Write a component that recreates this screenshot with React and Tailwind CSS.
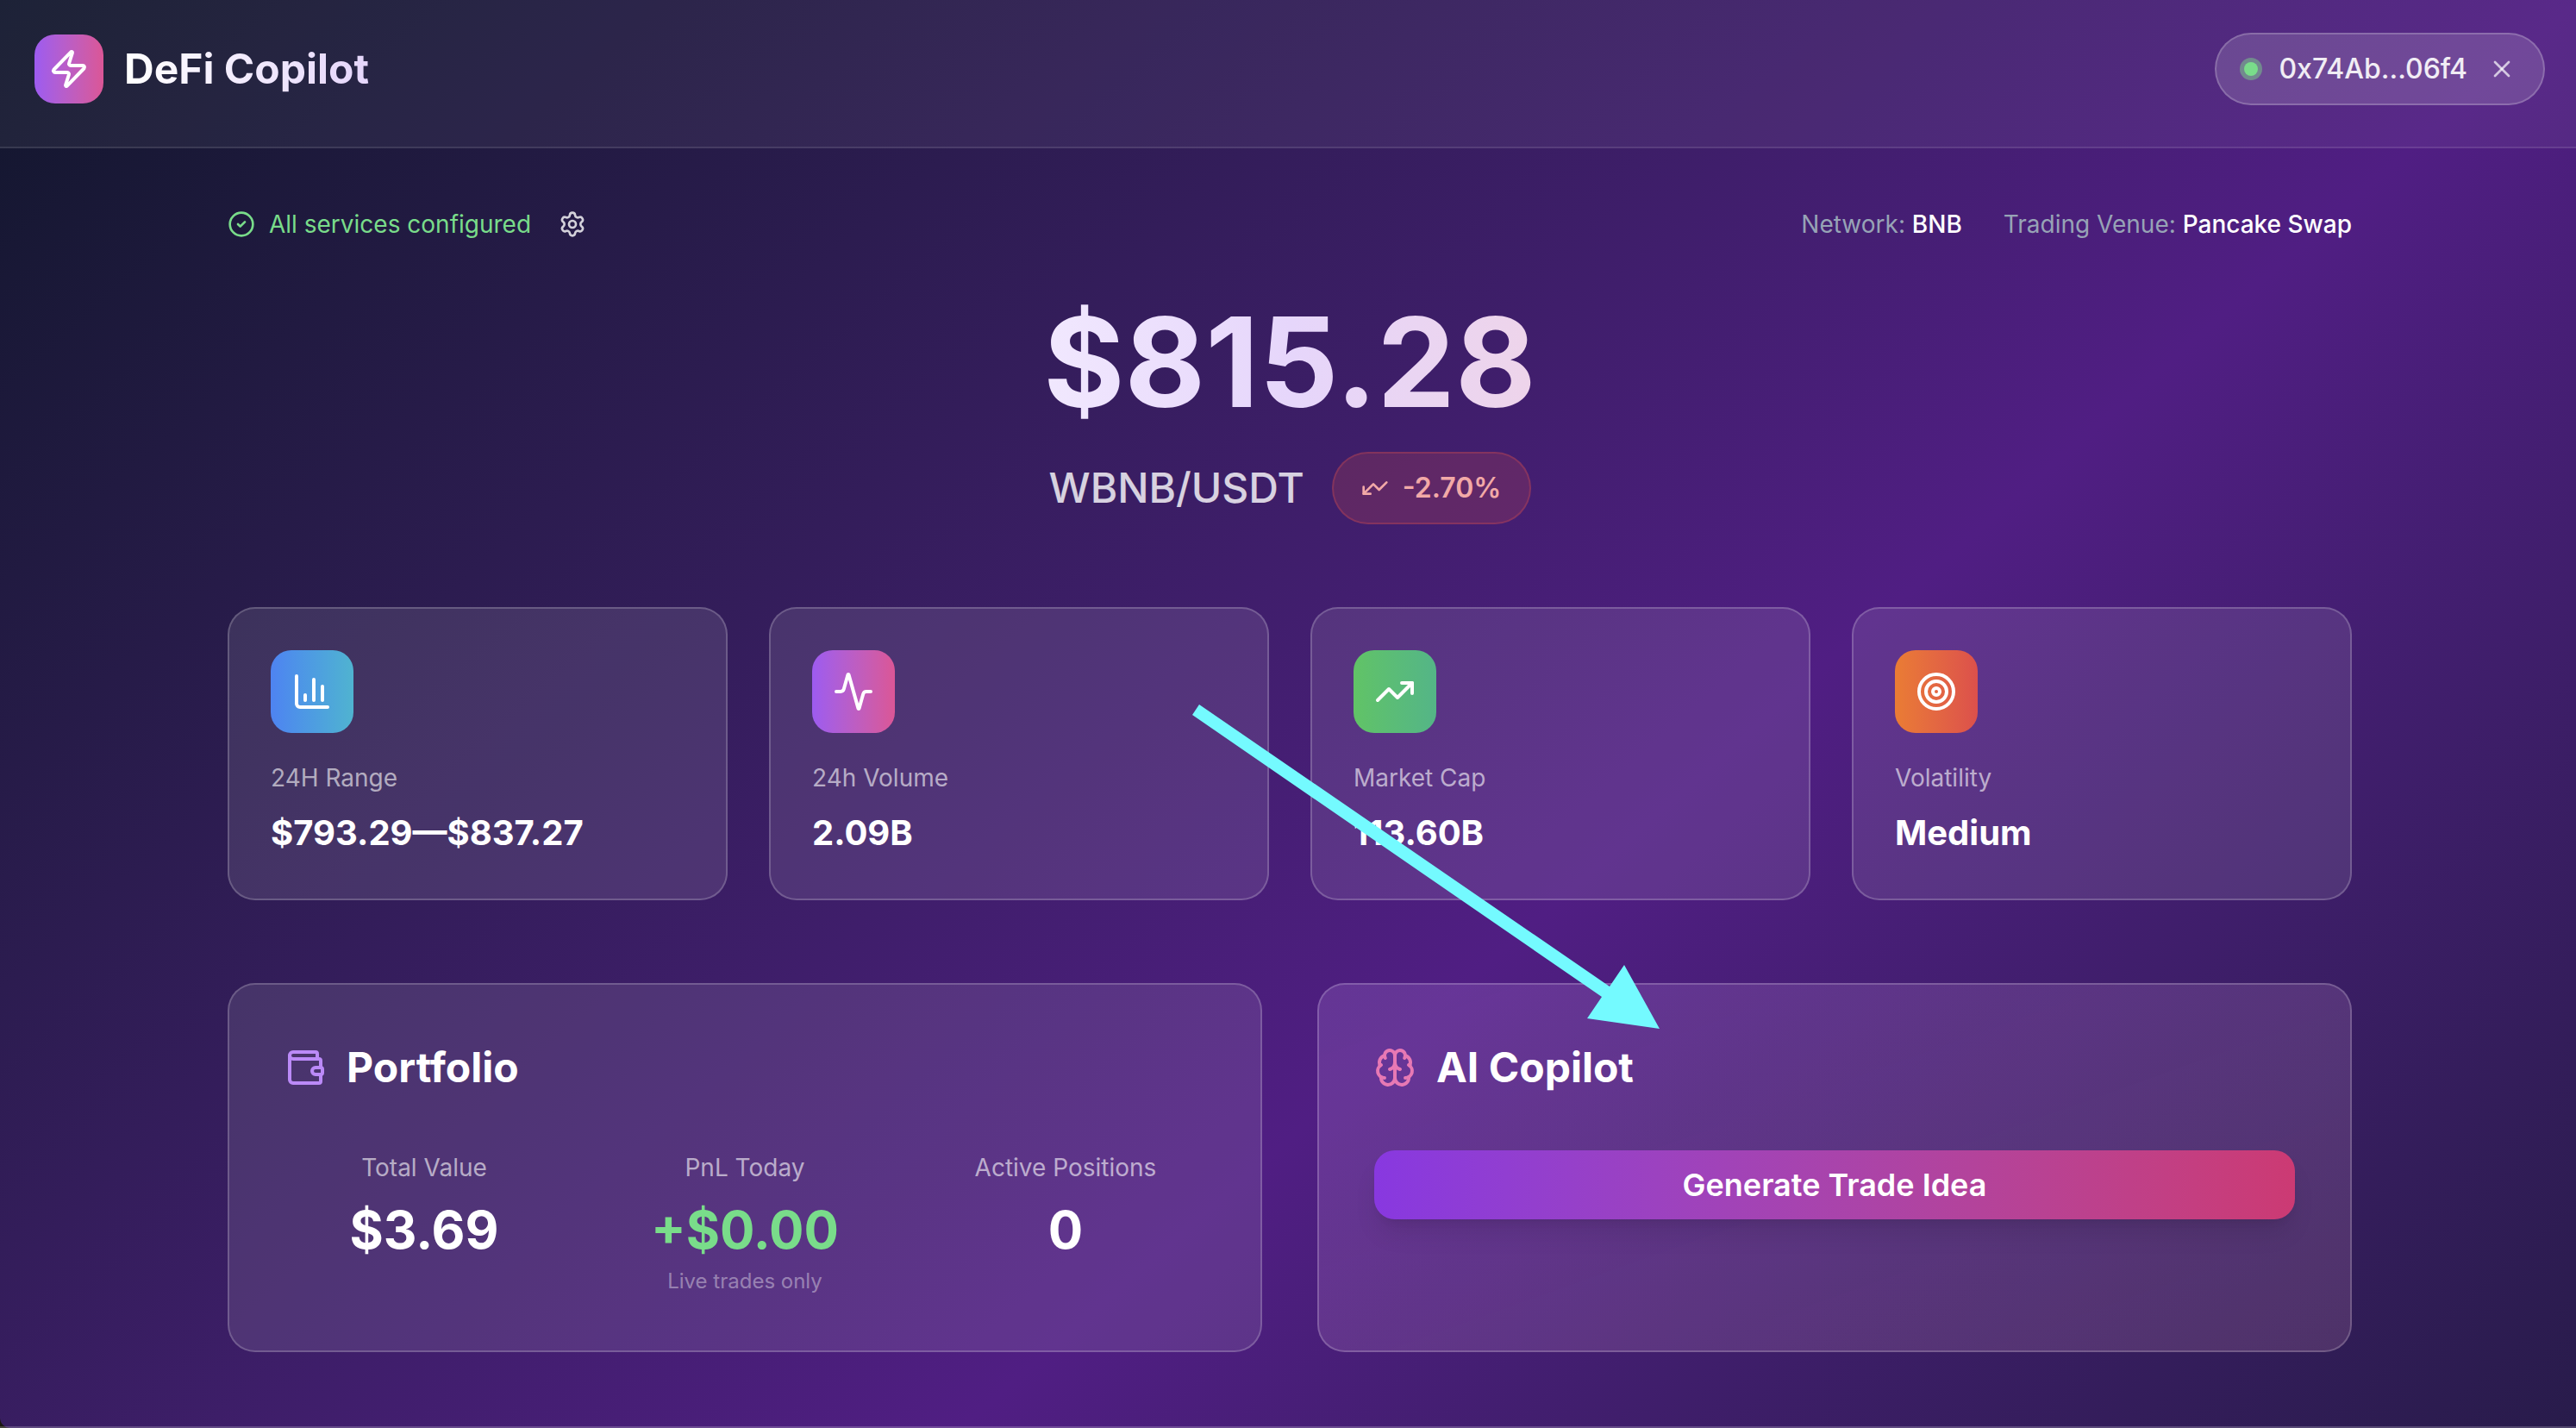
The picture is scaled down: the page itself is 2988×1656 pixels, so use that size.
import { Zap, X, CircleCheck, Settings, TrendingUp, ChartColumn, Activity, Target, Wallet, Brain } from "lucide-react";

const stats = [
  { label: "24H Range", value: "$793.29—$837.27", Icon: ChartColumn, tile: "from-[#4e83f1] to-[#50b3d0]" },
  { label: "24h Volume", value: "2.09B", Icon: Activity, tile: "from-[#9d5bf0] to-[#db5696]" },
  { label: "Market Cap", value: "113.60B", Icon: TrendingUp, tile: "from-[#61c366] to-[#54b587]" },
  { label: "Volatility", value: "Medium", Icon: Target, tile: "from-[#ea7c34] to-[#dc504b]" },
];

const portfolio = [
  { label: "Total Value", value: "$3.69", color: "text-white" },
  { label: "PnL Today", value: "+$0.00", color: "text-[#79dc8a]", note: "Live trades only" },
  { label: "Active Positions", value: "0", color: "text-white" },
];

function Header() {
  return (
    <header className="flex h-[172px] items-start justify-between border-b-2 border-white/10 bg-white/5 px-10 pt-[38px]">
      <div className="flex items-center gap-6 pt-[2px]">
        <div className="flex size-20 items-center justify-center rounded-3xl bg-linear-to-r from-[#9d5bf0] to-[#db5696]">
          <Zap size={48} />
        </div>
        <h1 className="bg-linear-to-r from-white to-[#e5d6fb] bg-clip-text text-5xl leading-16 font-bold text-transparent">
          DeFi Copilot
        </h1>
      </div>
      <div className="flex h-[84px] items-center rounded-full border-2 border-white/20 bg-white/15 px-8">
        <span className="size-4 rounded-full bg-[#79dc8a] ring-5 ring-[#79dc8a]/45" />
        <span className="ml-6 text-[32px] leading-12 font-medium text-white/90">0x74Ab...06f4</span>
        <button type="button" aria-label="Disconnect wallet" className="ml-6 text-white/70">
          <X size={32} />
        </button>
      </div>
    </header>
  );
}

function StatusRow() {
  return (
    <div className="flex items-center justify-between text-[28px] leading-10">
      <div className="flex items-center">
        <CircleCheck size={32} className="text-[#79dc8a]" />
        <span className="ml-4 text-[#79dc8a]">All services configured</span>
        <button type="button" aria-label="Settings" className="ml-8 text-white/80">
          <Settings size={32} />
        </button>
      </div>
      <div className="flex items-center gap-12 text-[#97a3b6]">
        <span>
          Network: <span className="font-medium text-white">BNB</span>
        </span>
        <span>
          Trading Venue: <span className="font-medium text-white">Pancake Swap</span>
        </span>
      </div>
    </div>
  );
}

function Price() {
  return (
    <section className="mx-auto mt-17 flex w-fit flex-col items-center">
      <p className="bg-linear-to-r from-[#f1e8fe] via-[#e6d6fb] to-[#eed4ea] bg-clip-text text-[144px] leading-[144px] font-bold text-transparent">
        $815.28
      </p>
      <div className="mt-8 flex items-center gap-8">
        <span className="text-5xl leading-16 font-medium text-white/80">WBNB/USDT</span>
        <span className="flex h-[84px] items-center gap-4 rounded-full border-2 border-[#dc504b]/30 bg-[#dc504b]/20 px-8 text-[32px] leading-12 font-semibold text-[#f2a9a7]">
          <TrendingUp size={32} className="rotate-180" />
          -2.70%
        </span>
      </div>
    </section>
  );
}

function StatCard({ label, value, Icon, tile }) {
  return (
    <article className="rounded-4xl border-2 border-white/20 bg-white/10 p-12">
      <div className={`flex size-24 items-center justify-center rounded-3xl bg-linear-to-r ${tile}`}>
        <Icon size={48} />
      </div>
      <p className="mt-8 text-[28px] leading-10 text-white/60">{label}</p>
      <p className="mt-4 text-[40px] leading-14 font-bold">{value}</p>
    </article>
  );
}

function Portfolio() {
  return (
    <section className="rounded-4xl border-2 border-white/20 bg-white/10 p-16">
      <h2 className="flex items-center gap-6 text-5xl leading-16 font-bold">
        <Wallet size={48} className="text-[#bb8af8]" />
        Portfolio
      </h2>
      <div className="mt-16 grid grid-cols-3 gap-12 text-center">
        {portfolio.map(({ label, value, color, note }) => (
          <div key={label}>
            <p className="text-[28px] leading-10 text-white/60">{label}</p>
            <p className={`mt-4 text-6xl leading-18 font-bold ${color}`}>{value}</p>
            {note && <p className="mt-2 text-2xl leading-8 text-white/40">{note}</p>}
          </div>
        ))}
      </div>
    </section>
  );
}

function Copilot() {
  return (
    <section className="rounded-4xl border-2 border-white/20 bg-white/9 bg-linear-to-br from-[#a855f7]/10 to-[#ec4899]/7 bg-origin-border p-16">
      <h2 className="flex items-center gap-6 text-5xl leading-16 font-bold">
        <Brain size={48} className="text-[#e779b4]" />
        AI Copilot
      </h2>
      <button
        type="button"
        className="mt-16 flex h-20 w-full items-center justify-center rounded-3xl bg-linear-to-r from-[#8838e0] to-[#cc3a73] text-4xl leading-14 font-semibold shadow-[0_20px_30px_-6px_rgba(0,0,0,0.1),0_8px_12px_-8px_rgba(0,0,0,0.1)]"
      >
        Generate Trade Idea
      </button>
    </section>
  );
}

export default function App() {
  return (
    <div className="relative overflow-hidden bg-[#1a1610] font-['Inter',sans-serif] text-white">
      <div className="-mr-1 rounded-bl-xl bg-linear-to-br from-[#11162c] via-[#501e83] to-[#11162c] bg-[length:100%_2640px]">
        <Header />
        <main className="mx-auto max-w-[2560px] px-12 pt-17 pb-[86px]">
          <StatusRow />
          <Price />
          <div className="mt-24 grid grid-cols-4 gap-12">
            {stats.map((stat) => (
              <StatCard key={stat.label} {...stat} />
            ))}
          </div>
          <div className="mt-24 grid grid-cols-2 gap-16">
            <Portfolio />
            <Copilot />
          </div>
        </main>
        <footer className="border-t-2 border-white/20" />
      </div>
      <svg className="pointer-events-none absolute top-[816px] left-[1382px] h-[380px] w-[544px]" viewBox="1382 816 544 380" fill="#74faff" aria-hidden="true">
        <path d="M1391 817 L1867 1144 L1884 1119 L1925 1193 L1841 1181 L1858 1156 L1383 829 Z" />
      </svg>
    </div>
  );
}
